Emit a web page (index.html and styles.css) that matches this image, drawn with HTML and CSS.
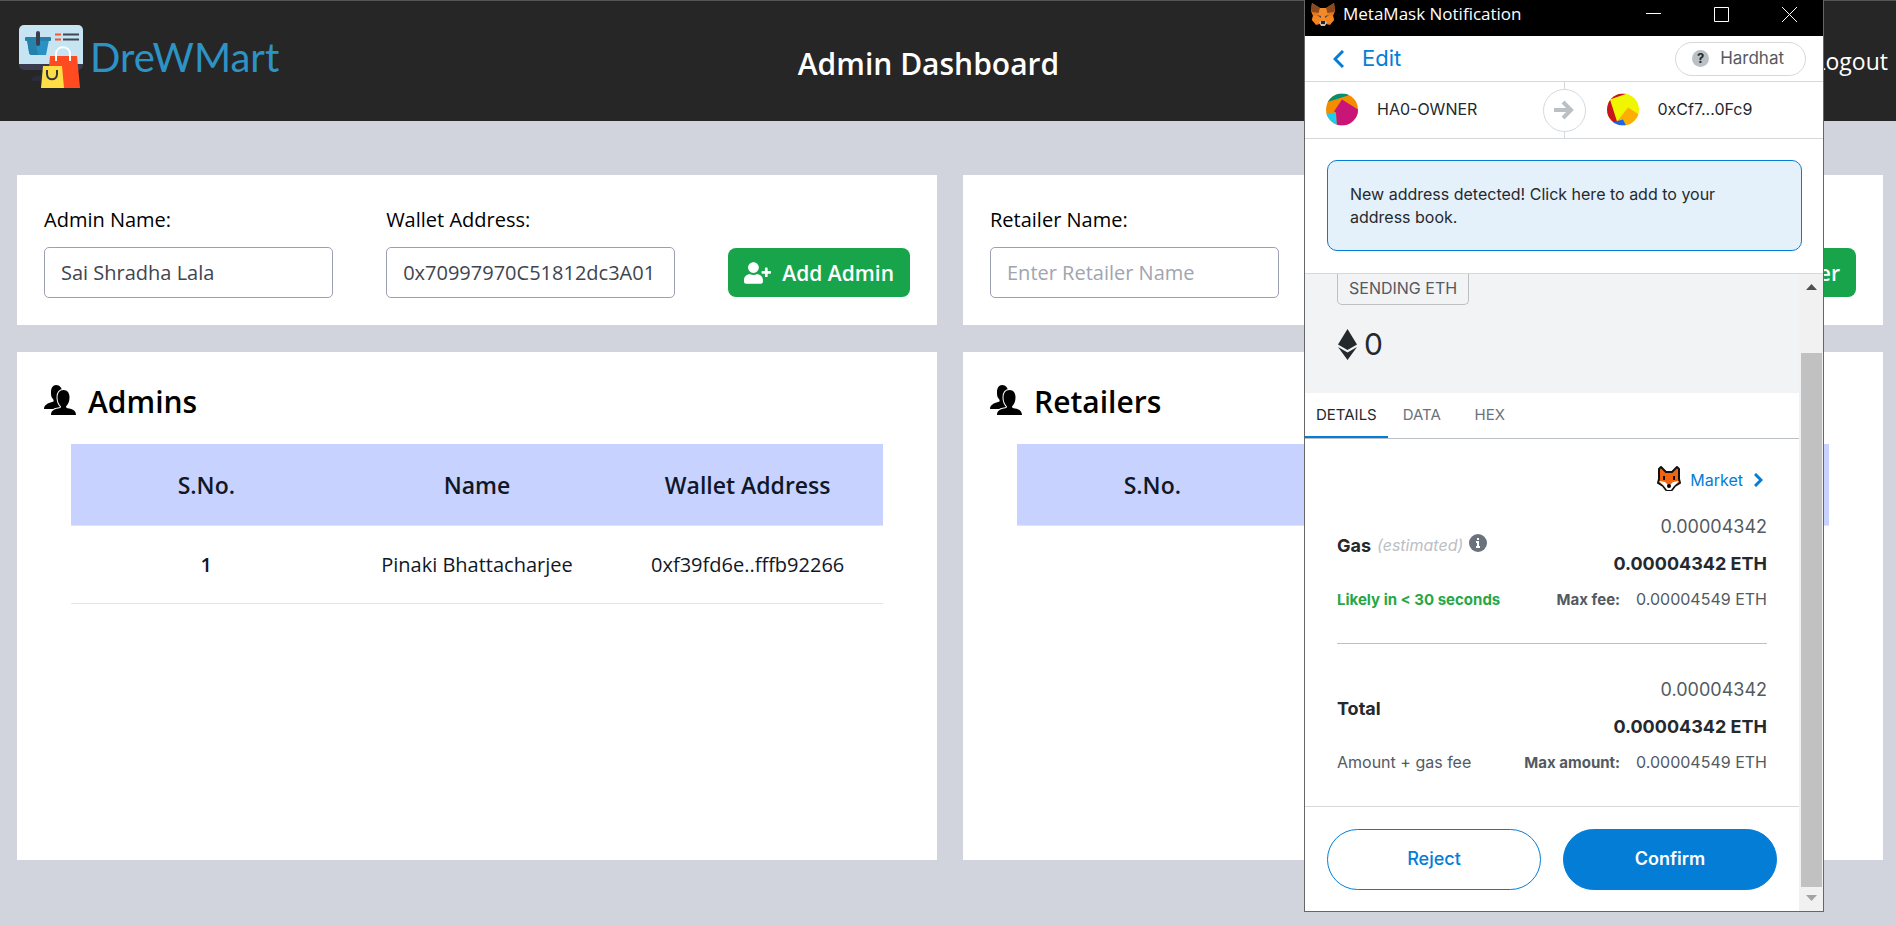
FILE: index.html
```
<!DOCTYPE html>
<html lang="en">
<head>
<meta charset="utf-8">
<title>DreWMart - Admin Dashboard</title>
<link rel="stylesheet" href="styles.css">
</head>
<body>
<svg class="defs" aria-hidden="true">
  <symbol id="users" viewBox="0 0 32 30">
    <path d="M12 0c4 0 6 3 6 7s-2 7-3 8c0 3 1 4 3 5v4H0c0-4 4-6 8-7 2 0 2-2 1-3-2-2-2-4-2-7 0-4 2-7 5-7z"/>
    <path d="M19.500 5c4 0 6 3 6 7.500 0 4-1.500 7-3.500 9 0 1 1 2 3 2 4 .5 7 2.500 7 6.500H7c0-4 3-6 7-6.500 2 0 3-1 3-2-2-2-3.500-5-3.500-9C13.500 8 15.500 5 19.500 5z" stroke="#fff" stroke-width="2" paint-order="stroke"/>
  </symbol>
  <symbol id="user-plus" viewBox="0 0 640 512">
    <path d="M624 208h-64v-64c0-8.800-7.200-16-16-16h-32c-8.800 0-16 7.200-16 16v64h-64c-8.800 0-16 7.200-16 16v32c0 8.800 7.200 16 16 16h64v64c0 8.800 7.200 16 16 16h32c8.800 0 16-7.200 16-16v-64h64c8.800 0 16-7.200 16-16v-32c0-8.800-7.200-16-16-16zm-400 48c70.700 0 128-57.300 128-128S294.700 0 224 0 96 57.300 96 128s57.300 128 128 128zm89.600 32h-16.700c-22.200 10.200-46.900 16-72.900 16s-50.600-5.800-72.900-16h-16.700C60.200 288 0 348.200 0 422.400V464c0 26.500 21.500 48 48 48h352c26.500 0 48-21.500 48-48v-41.600c0-74.200-60.200-134.400-134.400-134.400z" fill="currentColor"/>
  </symbol>
</svg>

<header class="navbar">
  <a class="brand" href="#">
    <svg class="brand-mark" viewBox="0 0 64 63" aria-hidden="true">
      <path d="M22 44h22v12H12c0-4 4-5 8-5 2 0 2-3 2-7z" fill="#2b2c3b"/>
      <rect y="20" width="64" height="25" rx="5" fill="#3a3b4e"/>
      <path d="M5 0h54a5 5 0 0 1 5 5v34H0V5a5 5 0 0 1 5-5z" fill="#c7e4f3"/>
      <path d="M8 15h22l-3 15H13c-2 0-3-1-3-3z" fill="#2b90c4"/>
      <path d="M8 15h8l3 15h-6c-2 0-3-1-3-3z" fill="#2580aa"/>
      <rect x="6" y="12" width="26" height="4" rx="1" fill="#2580aa"/>
      <path d="M19 8v11" stroke="#3a3b4e" stroke-width="4" stroke-linecap="round"/>
      <path d="M36 9.500h6M36 14.500h6" stroke="#f4592f" stroke-width="2"/>
      <path d="M44 9.500h16M44 14.500h16" stroke="#3f4757" stroke-width="2"/>
      <path d="M31 31h27l3 32H28z" fill="#ff4b1f"/>
      <path d="M37 36v-7c0-9 14-9 14 0v7" fill="none" stroke="#fff" stroke-width="2"/>
      <path d="M24 41h19l2 22H22z" fill="#ffdd45"/>
      <path d="M28 45v4c0 7 10 7 10 0v-4" fill="none" stroke="#333542" stroke-width="2"/>
    </svg>
    <span class="brand-name">DreWMart</span>
  </a>
  <h1 class="page-title">Admin Dashboard</h1>
  <a class="logout" href="#">Logout</a>
</header>

<main class="board">
  <form class="panel entry">
    <div class="field">
      <label for="admin-name">Admin Name:</label>
      <input id="admin-name" type="text" value="Sai Shradha Lala">
    </div>
    <div class="field">
      <label for="admin-wallet">Wallet Address:</label>
      <input id="admin-wallet" type="text" value="0x70997970C51812dc3A01">
    </div>
    <button class="add" type="button"><svg aria-hidden="true"><use href="#user-plus"/></svg>Add Admin</button>
  </form>
  <form class="panel entry">
    <div class="field">
      <label for="retailer-name">Retailer Name:</label>
      <input id="retailer-name" type="text" placeholder="Enter Retailer Name">
    </div>
    <div class="field">
      <label for="retailer-wallet">Wallet Address:</label>
      <input id="retailer-wallet" type="text" placeholder="Enter Wallet Address">
    </div>
    <button class="add" type="button"><svg aria-hidden="true"><use href="#user-plus"/></svg>Add Retailer</button>
  </form>
  <section class="panel listing">
    <h2><svg aria-hidden="true"><use href="#users"/></svg>Admins</h2>
    <table>
      <thead><tr><th scope="col">S.No.</th><th scope="col">Name</th><th scope="col">Wallet Address</th></tr></thead>
      <tbody><tr><th scope="row">1</th><td>Pinaki Bhattacharjee</td><td>0xf39fd6e..fffb92266</td></tr></tbody>
    </table>
  </section>
  <section class="panel listing">
    <h2><svg aria-hidden="true"><use href="#users"/></svg>Retailers</h2>
    <table>
      <thead><tr><th scope="col">S.No.</th><th scope="col">Name</th><th scope="col">Wallet Address</th></tr></thead>
    </table>
  </section>
</main>

<aside class="wallet" aria-label="MetaMask Notification">
  <div class="titlebar">
    <svg class="fox" viewBox="0 0 24 23" aria-hidden="true">
      <path d="M1 0l8 5h6l8-5 1 8-2 5 1 4-4 5-4-1-2 2h-2l-2-2-4 1-4-5 1-4-2-5z" fill="#e8761b"/>
      <path d="M1 0l8 5-1 5-7-1-1-2zM23 0l-8 5 1 5 7-1 1-2z" fill="#8a4a1d"/>
      <path d="M9 5h6l2 7-3 7h-4l-3-7z" fill="#f28a2a"/>
      <path d="M2 13l6-1 2 7-5 2-4-4zM22 13l-6-1-2 7 5 2 4-4z" fill="#f5841f"/>
      <path d="M6 12l4 1v2zM18 12l-4 1v2z" fill="#3b4a5c"/>
      <path d="M8 19l2-1h4l2 1-2 4h-4z" fill="#cdbfb2"/>
      <path d="M10 18h4v3h-4z" fill="#20262d"/>
    </svg>
    <span class="titlebar-text">MetaMask Notification</span>
    <button type="button" aria-label="Minimize"><svg viewBox="0 0 15 15"><path d="M0 6.500h15"/></svg></button>
    <button type="button" aria-label="Maximize"><svg viewBox="0 0 15 15"><path d="M.5.500h14v14H.500z"/></svg></button>
    <button type="button" aria-label="Close"><svg viewBox="0 0 15 15"><path d="M0 0l15 15M15 0L0 15"/></svg></button>
  </div>
  <div class="edit-row">
    <a class="edit" href="#"><svg viewBox="0 0 11 18" aria-hidden="true"><path d="M10 1L2 9l8 8"/></svg>Edit</a>
    <button class="network" type="button"><span class="network-mark">?</span>Hardhat</button>
  </div>
  <div class="accounts">
    <div class="account">
      <svg viewBox="0 0 32 32" aria-hidden="true">
        <clipPath id="disc"><circle cx="16" cy="16" r="16"/></clipPath>
        <g clip-path="url(#disc)"><path fill="#f58c00" d="M0 0h32v32H0z"/><path fill="#018e77" d="M0 9V0h24L22 2z"/><path fill="#19cdf5" d="M0 20l10-1 1 13H0z"/><path fill="#c91478" d="M16 6l16 10v16H11l-1-13-2-1z"/></g>
      </svg>
      <span>HA0-OWNER</span>
    </div>
    <div class="arrow"><span><svg viewBox="0 0 20 20" aria-hidden="true"><path d="M0 10h17M9 2l8 8-8 8"/></svg></span></div>
    <div class="account">
      <svg viewBox="0 0 32 32" aria-hidden="true">
        <g clip-path="url(#disc)"><path fill="#f0f500" d="M0 0h32v32H0z"/><path fill="#c8141e" d="M0 0h20L3 6l7 22-4 4H0z"/><path fill="#fcae03" d="M21 14l11 7v11H17L10 28z"/><path fill="#1c63f2" d="M5 29l11-3 3 6H5z"/></g>
      </svg>
      <span>0xCf7...0Fc9</span>
    </div>
  </div>
  <div class="notice-wrap"><a class="notice" href="#">New address detected! Click here to add to your address book.</a></div>
  <div class="scroller">
    <div class="content">
      <div class="summary">
        <span class="chip">SENDING ETH</span>
        <div class="amount">
          <svg viewBox="0 0 19 31" aria-hidden="true"><path d="M9.500 0L19 15.500 9.500 21 0 15.500zM0 18l9.500 5.500L19 18 9.500 31z"/></svg>0
        </div>
      </div>
      <nav class="tabs">
        <button class="tab active" type="button">DETAILS</button>
        <button class="tab" type="button">DATA</button>
        <button class="tab" type="button">HEX</button>
      </nav>
      <div class="details">
        <a class="market" href="#">
          <svg class="market-fox" viewBox="0 0 24 25" aria-hidden="true">
            <path d="M4 1l5 5h6l5-5 2 2v10l1 4-5 3-3 4h-6l-3-4-5-3 1-4V3z" fill="#f4640d" stroke="#111" stroke-width="2" stroke-linejoin="round"/>
            <path d="M2 15l6 1 4 4 4-4 6-1-5 5-3 4h-4l-3-4z" fill="#fff"/>
            <path d="M7 10v4M17 10v4" stroke="#111" stroke-width="2"/><circle cx="12" cy="20" r="2"/>
          </svg>
          Market
          <svg class="market-next" viewBox="0 0 9 14" aria-hidden="true"><path d="M1 1l6 6-6 6"/></svg>
        </a>
        <div class="cost gas">
          <div class="cost-name"><strong>Gas</strong><em>(estimated)</em>
            <svg viewBox="0 0 18 18" aria-hidden="true"><circle cx="9" cy="9" r="9" fill="#6a737d"/><path d="M9 4v2M7 8h2v5M7 13h4" stroke="#fff" stroke-width="2" fill="none"/></svg>
          </div>
          <div class="primary">0.00004342</div>
          <div class="primary strong">0.00004342 ETH</div>
          <div class="hint likely">Likely in &lt; 30 seconds</div>
          <div class="limit"><strong>Max fee:</strong>0.00004549 ETH</div>
        </div>
        <div class="cost">
          <div class="cost-name"><strong>Total</strong></div>
          <div class="primary">0.00004342</div>
          <div class="primary strong">0.00004342 ETH</div>
          <div class="hint">Amount + gas fee</div>
          <div class="limit"><strong>Max amount:</strong>0.00004549 ETH</div>
        </div>
      </div>
      <footer class="actions">
        <button class="reject" type="button">Reject</button>
        <button class="confirm" type="button">Confirm</button>
      </footer>
    </div>
    <div class="scrollbar" aria-hidden="true">
      <svg viewBox="0 0 11 6"><path d="M0 6l5.500-6L11 6z" fill="#505050"/></svg>
      <div class="thumb"></div>
      <svg viewBox="0 0 11 6"><path d="M0 0l5.500 6L11 0z" fill="#a3a3a3"/></svg>
    </div>
  </div>
</aside>
</body>
</html>
```

FILE: styles.css
```
* { box-sizing: border-box; }

body {
  margin: 0;
  min-height: 100vh;
  background: #d1d4dc;
  color: #000;
  font: 20px/32px "Open Sans", "Noto Sans", sans-serif;
}

a { color: inherit; text-decoration: none; }
button, input { font: inherit; color: inherit; margin: 0; }
button { border: 0; background: none; padding: 0; }
h1, h2 { margin: 0; font-weight: 600; }
.defs { position: absolute; width: 0; height: 0; }

/* Top bar */
.navbar {
  display: grid;
  grid-template-columns: 1fr auto 1fr;
  align-items: center;
  height: 121px;
  padding: 0 8px 0 19px;
  border-top: 1px solid #555;
  background: #262626;
  color: #fff;
}
.brand { display: flex; align-items: center; gap: 7px; padding-bottom: 9px; }
.brand-mark { width: 64px; height: 63px; }
.brand-name { color: #2d93c4; font: 40px/48px Lato, sans-serif; }
.page-title { padding: 5px 50px 0 0; font-size: 30px; line-height: 40px; }
.logout { justify-self: end; font-size: 23px; }

/* Dashboard */
.board {
  display: grid;
  grid-template-columns: 1fr 1fr;
  gap: 27px 26px;
  padding: 54px 13px 67px 17px;
}
.panel { background: #fff; padding: 27px; }
.entry { display: flex; justify-content: space-between; align-items: flex-end; }
.field { width: 33.333%; }
.field label { display: block; margin: 2px 0 11px; }
.field input {
  display: block;
  width: 100%;
  height: 51px;
  padding: 0 16px;
  border: 1px solid #9ca0b0;
  border-radius: 5px;
  background: #fff;
  color: #41454f;
}
.field input::placeholder { color: #a0a5b0; opacity: 1; }
.add {
  display: flex;
  align-items: center;
  gap: 11px;
  height: 49px;
  margin-bottom: 1px;
  padding: 0 16px;
  border-radius: 8px;
  background: #18a44b;
  color: #fff;
  font-size: 21px;
  font-weight: 600;
}
.add svg { width: 27px; height: 22px; }

.listing { min-height: 508px; }
.listing h2 { display: flex; align-items: center; gap: 12px; margin: 1px 0 20px; font-size: 30px; line-height: 44px; }
.listing h2 svg { width: 32px; height: 30px; margin-bottom: 4px; }
.listing table {
  width: calc(100% - 54px);
  margin: 0 27px;
  border-collapse: collapse;
  table-layout: fixed;
  text-align: center;
  color: #101828;
}
.listing th, .listing td { padding: 23px 8px 22px; border-bottom: 1px solid #e3e5e9; }
.listing thead th { padding: 25px 8px 24px; background: #c7d2fe; font-size: 23px; }
.listing th { font-weight: 600; }

/* Wallet window floating over the page */
.wallet {
  position: absolute;
  top: 0;
  right: 72px;
  width: 520px;
  border: 1px solid #666;
  border-top: 0;
  background: #fff;
  color: #24292e;
  font: 16px/23px Inter, "Liberation Sans", sans-serif;
}
.titlebar { display: flex; align-items: center; height: 36px; padding: 0 16px 8px 6px; background: #000; color: #fff; }
.fox { width: 24px; height: 23px; }
.titlebar-text { flex: 1; padding-left: 8px; font: 17px/24px "Open Sans", sans-serif; }
.titlebar button { width: 15px; height: 15px; margin: 0 0 0 53px; }
.titlebar button:last-child { margin-right: 10px; }
.titlebar svg { display: block; }
.titlebar button svg { width: 15px; height: 15px; fill: none; stroke: #fff; }

.edit-row { display: flex; justify-content: space-between; align-items: center; height: 46px; padding: 0 17px 0 28px; border-bottom: 1px solid #d6d9dc; }
.edit { display: flex; align-items: center; gap: 18px; color: #037dd6; font-size: 22px; }
.edit svg { width: 11px; height: 18px; fill: none; stroke: currentColor; stroke-width: 3; }
.network { display: flex; align-items: center; gap: 11px; height: 34px; padding: 0 21px 0 16px; border: 1px solid #d6d9dc; border-radius: 17px; color: #535a61; font-size: 17px; }
.network-mark { width: 17px; height: 17px; border-radius: 50%; background: #bbc0c5; color: #24292e; font-size: 13px; font-weight: 700; line-height: 17px; text-align: center; }

.accounts { display: grid; grid-template-columns: 1fr 43px 1fr; height: 57px; border-bottom: 1px solid #d6d9dc; }
.account { display: flex; align-items: center; gap: 19px; padding: 0 0 1px 21px; }
.account svg { width: 32px; height: 33px; }
.arrow { display: grid; place-items: center; background: linear-gradient(#d6d9dc, #d6d9dc) center / 1px 100% no-repeat; }
.arrow span { display: grid; place-items: center; width: 43px; height: 43px; border: 1px solid #d6d9dc; border-radius: 50%; background: #fff; }
.arrow svg { width: 20px; height: 20px; fill: none; stroke: #bbc0c5; stroke-width: 4; }

.notice-wrap { padding: 21px 21px 22px 22px; border-bottom: 1px solid #d6d9dc; }
.notice { display: block; padding: 22px 80px 21px 22px; border: 1px solid #037dd6; border-radius: 10px; background: #e5f1fa; }

.scroller { display: flex; }
.content { flex: 1; min-width: 0; }
.summary { height: 119px; padding: 0 32px; background: #f2f3f4; }
.chip { display: inline-block; height: 31px; padding: 3px 11px; border: 1px solid #bbc0c5; border-top: 0; border-radius: 0 0 5px 5px; color: #535a61; }
.amount { display: flex; align-items: center; gap: 7px; padding: 19px 1px; font-size: 30px; line-height: 40px; }
.amount svg { width: 19px; height: 31px; fill: #24292e; }

.tabs { display: flex; height: 46px; border-bottom: 1px solid #bbc0c5; }
.tab { min-width: 68px; height: 45px; padding: 0 11px; border-bottom: 2px solid transparent; color: #6a737d; font-size: 15px; }
.tab.active { border-color: #037dd6; color: #24292e; }

.details { padding: 28px 32px 0; }
.market { display: flex; justify-content: flex-end; align-items: center; gap: 9px; height: 26px; padding-right: 4px; color: #037dd6; }
.market-fox { width: 24px; height: 25px; margin-bottom: 4px; }
.market-next { width: 9px; height: 14px; margin-left: 2px; fill: none; stroke: currentColor; stroke-width: 3; }
.cost { display: grid; grid-template: 37px 37px 34px / auto 1fr; align-items: center; padding: 27px 0; color: #535a61; }
.cost.gas { padding-top: 15px; border-bottom: 1px solid #bbc0c5; }
.cost-name { grid-row: 1 / 3; display: flex; align-items: center; gap: 6px; font-size: 18px; color: #24292e; }
.cost-name em { color: #bbc0c5; font-size: 16px; }
.cost-name svg { width: 18px; height: 18px; margin-bottom: 4px; }
.primary { grid-column: 2; text-align: right; font-size: 18px; }
.primary.strong { color: #24292e; font-weight: 700; }
.likely { color: #28a745; font-size: 15px; font-weight: 700; }
.limit { text-align: right; }
.limit strong { margin-right: 16px; font-size: 15px; }

.actions { display: flex; gap: 22px; padding: 22px 22px 21px; border-top: 1px solid #d6d9dc; }
.actions button { flex: 1; height: 61px; padding-bottom: 3px; border: 1px solid #037dd6; border-radius: 31px; color: #037dd6; font-size: 18px; font-weight: 500; }
.actions .confirm { background: #037dd6; color: #fff; font-weight: 600; }

.scrollbar { display: flex; flex-direction: column; align-items: center; width: 24px; padding: 10px 1px 10px 2px; background: #f1f1f1; }
.scrollbar svg { width: 11px; height: 6px; }
.thumb { flex: 1; align-self: stretch; margin: 63px 0 8px; background: #c1c1c1; }
```
